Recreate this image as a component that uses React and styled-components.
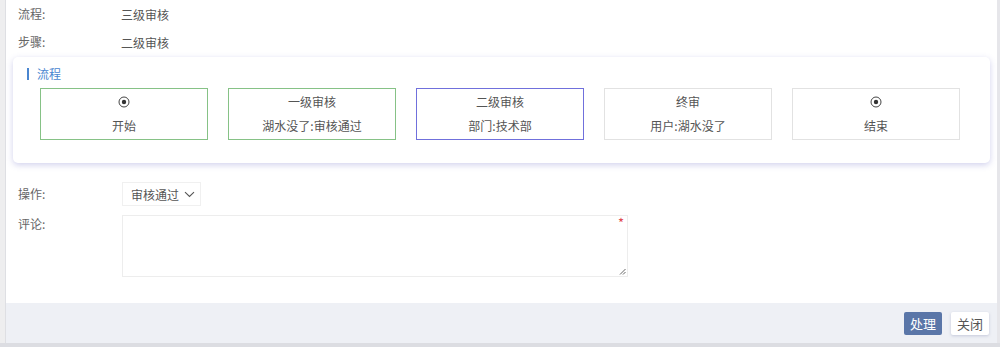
import React from 'react';
import styled, { createGlobalStyle } from 'styled-components';

const GlobalStyle = createGlobalStyle`
  html, body {
    margin: 0;
    padding: 0;
    background: #ffffff;
  }
  body {
    font-family: "Noto Sans CJK SC", "Noto Sans", sans-serif;
    font-size: 12px;
    color: #555;
  }
`;

const SFrame = styled.div`
  width: 1000px;
  height: 347px;
  box-sizing: border-box;
  display: flex;
  background: #f2f2f4;
  border-bottom: 4px solid #dcdde2;
`;

const SLeftEdge = styled.div`
  flex: 0 0 5px;
  background: #eeeeef;
  border-right: 1px solid #dedfe3;
`;

const SWindow = styled.div`
  flex: 1;
  min-width: 0;
  display: flex;
  flex-direction: column;
  border-right: 3px solid #e6e6ea;
`;

const SBody = styled.div`
  flex: 1;
  background: #fff;
  padding: 0 7px 0 7px;
`;

const SRow = styled.div`
  display: flex;
  align-items: ${(p) => (p.top ? 'flex-start' : 'center')};
  height: ${(p) => p.h || 28}px;
  margin-top: ${(p) => p.mt || 0}px;
  padding-left: 5px;
`;

const SLabel = styled.div`
  width: 103px;
  flex-shrink: 0;
  color: #666;
  line-height: 18px;
  padding-top: ${(p) => (p.top ? 1 : 0)}px;
`;

const SValue = styled.div`
  color: #555;
`;

const SCard = styled.div`
  margin-top: 1px;
  border-radius: 5px;
  background: #fff;
  box-shadow: 0 2px 6px rgba(90, 90, 190, 0.28);
  padding: 9px 28px 23px 14px;
`;

const STitle = styled.div`
  display: flex;
  align-items: center;
  color: #4a86d0;
  line-height: 16px;
  &::before {
    content: '';
    width: 2px;
    height: 12px;
    background: #4a86d0;
    margin-right: 8px;
  }
`;

const SNodes = styled.div`
  display: flex;
  gap: 20px;
  margin-top: 6px;
  padding-left: 13px;
`;

const SNode = styled.div`
  width: 168px;
  height: 52px;
  box-sizing: border-box;
  border: 1px solid ${(p) => p.color || '#e2e2e2'};
  display: flex;
  flex-direction: column;
  align-items: center;
  justify-content: center;
  gap: 6px;
  color: #555;
  line-height: 18px;
`;

const SNodeLine = styled.div`
  height: 18px;
  display: flex;
  align-items: center;
`;

const SSelect = styled.div`
  margin-left: 1px;
  height: 24px;
  box-sizing: border-box;
  width: 79px;
  border: 1px solid #f0f0f0;
  display: flex;
  align-items: center;
  padding-left: 8px;
  gap: 5px;
  color: #555;
`;

const STextArea = styled.div`
  position: relative;
  margin-left: 1px;
  margin-top: 1px;
  width: 506px;
  height: 62px;
  box-sizing: border-box;
  border: 1px solid #ededed;
`;

const SStar = styled.span`
  position: absolute;
  right: 3px;
  top: 2px;
  color: #e0484e;
  font-size: 13px;
  line-height: 10px;
`;

const SGrip = styled.svg`
  position: absolute;
  right: 1px;
  bottom: 1px;
`;

const SFooter = styled.div`
  height: 40px;
  background: #eef0f5;
  display: flex;
  align-items: center;
  justify-content: flex-end;
  gap: 9px;
  padding-right: 8px;
`;

const SButton = styled.div`
  width: 38px;
  height: 23px;
  display: flex;
  align-items: center;
  justify-content: center;
  border-radius: 2px;
  font-size: 13px;
  background: ${(p) => (p.primary ? '#5a76a8' : '#fff')};
  color: ${(p) => (p.primary ? '#fff' : '#555')};
  box-shadow: ${(p) => (p.primary ? 'none' : '0 1px 3px rgba(120, 130, 170, 0.35)')};
`;

function RadioIcon() {
  return (
    <svg width="12" height="12" viewBox="0 0 12 12">
      <circle cx="6" cy="6" r="5" fill="none" stroke="#444" strokeWidth="1" />
      <circle cx="6" cy="6" r="2.2" fill="#333" />
    </svg>
  );
}

function Chevron() {
  return (
    <svg width="11" height="7" viewBox="0 0 11 7">
      <path d="M1 1.2 L5.5 5.5 L10 1.2" fill="none" stroke="#555" strokeWidth="1.1" />
    </svg>
  );
}

const nodes = [
  { top: <RadioIcon />, bottom: '开始', color: '#86c286' },
  { top: '一级审核', bottom: '湖水没了:审核通过', color: '#86c286' },
  { top: '二级审核', bottom: '部门:技术部', color: '#7070dc' },
  { top: '终审', bottom: '用户:湖水没了' },
  { top: <RadioIcon />, bottom: '结束' },
];

export default function App() {
  return (
    <SFrame>
      <GlobalStyle />
      <SLeftEdge />
      <SWindow>
        <SBody>
          <SRow>
            <SLabel>流程:</SLabel>
            <SValue>三级审核</SValue>
          </SRow>
          <SRow>
            <SLabel>步骤:</SLabel>
            <SValue>二级审核</SValue>
          </SRow>
          <SCard>
            <STitle>流程</STitle>
            <SNodes>
              {nodes.map((n, i) => (
                <SNode key={i} color={n.color}>
                  <SNodeLine>{n.top}</SNodeLine>
                  <SNodeLine>{n.bottom}</SNodeLine>
                </SNode>
              ))}
            </SNodes>
          </SCard>
          <SRow h={26} mt={18}>
            <SLabel>操作:</SLabel>
            <SSelect>
              审核通过
              <Chevron />
            </SSelect>
          </SRow>
          <SRow top h={62} mt={7}>
            <SLabel top>评论:</SLabel>
            <STextArea>
              <SStar>*</SStar>
              <SGrip width="7" height="7" viewBox="0 0 7 7">
                <path d="M6.5 1 L1 6.5 M6.5 4 L4 6.5" stroke="#666" strokeWidth="1" />
              </SGrip>
            </STextArea>
          </SRow>
        </SBody>
        <SFooter>
          <SButton primary>处理</SButton>
          <SButton>关闭</SButton>
        </SFooter>
      </SWindow>
    </SFrame>
  );
}
